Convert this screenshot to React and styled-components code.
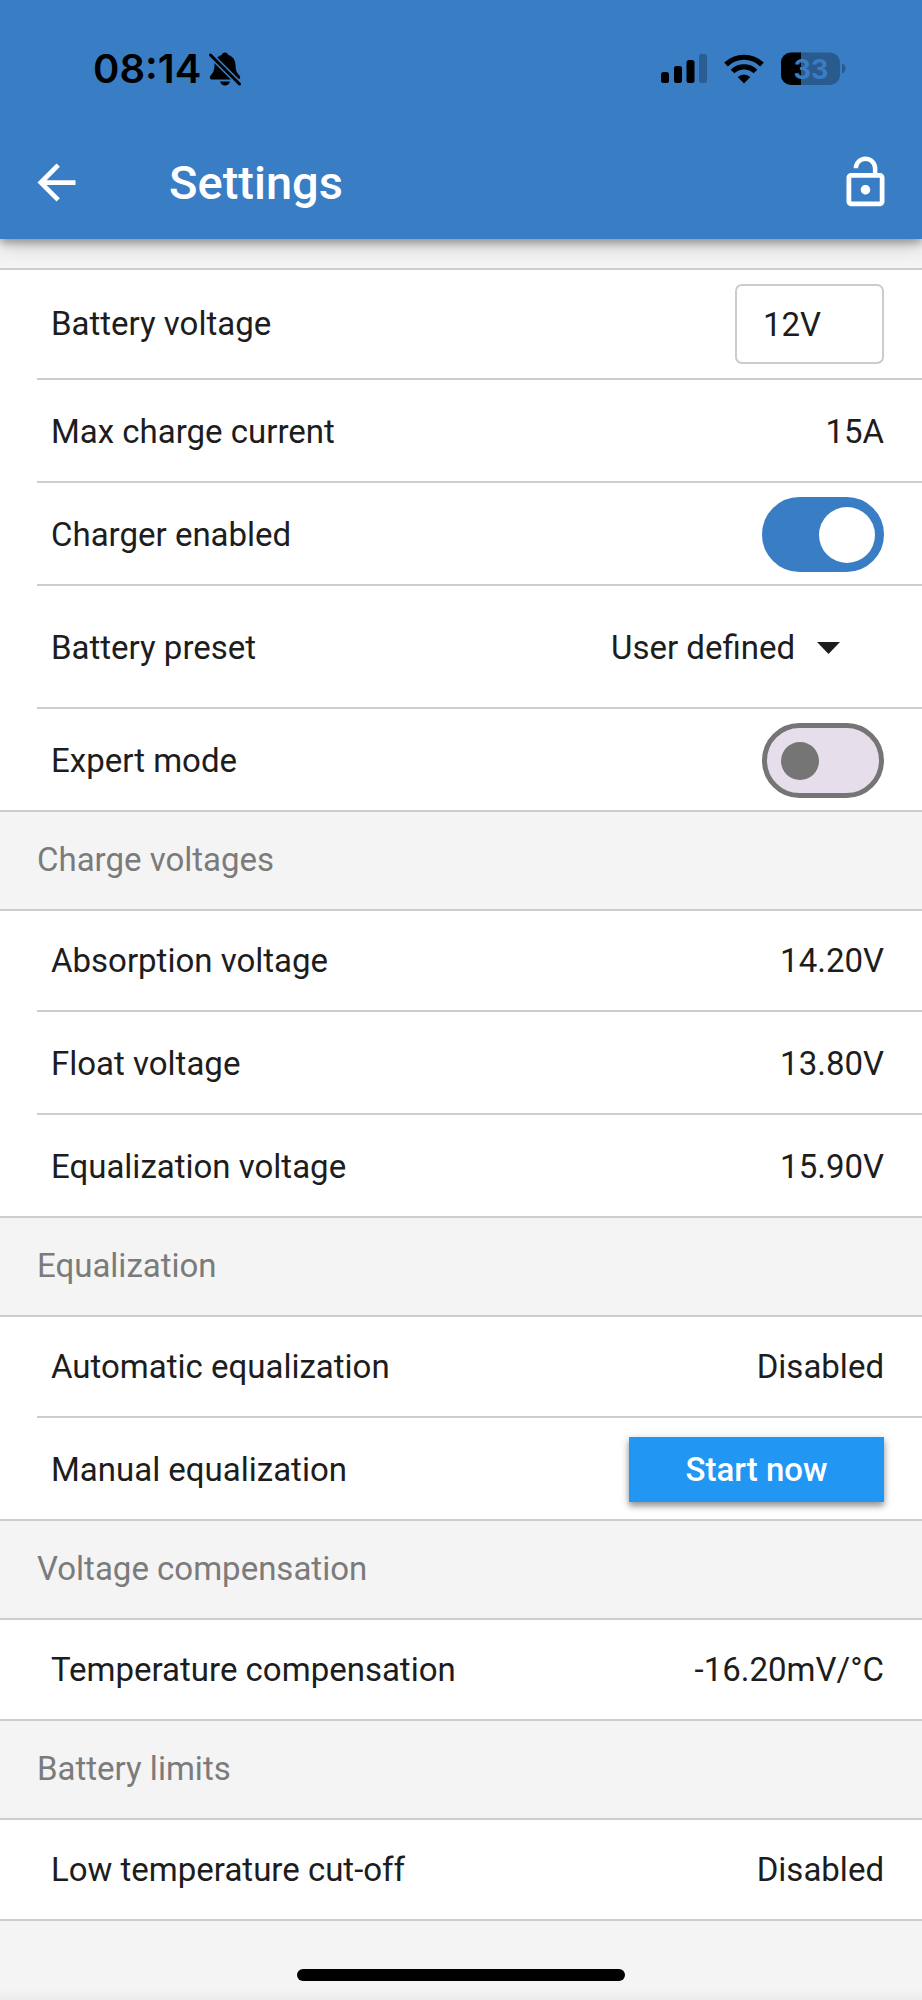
import React, { useState } from 'react'
import styled, { createGlobalStyle } from 'styled-components'

const GlobalStyle = createGlobalStyle`
  * {
    box-sizing: border-box;
  }
  body {
    margin: 0;
    background: #f4f4f4;
    color: #1d1d1d;
    font-family: Roboto, sans-serif;
    font-size: 33px;
    line-height: 40px;
  }
  button, input, select {
    font: inherit;
    color: inherit;
  }
`

const Page = styled.div`
  display: flex;
  flex-direction: column;
  min-height: 100vh;
`

const Header = styled.header`
  position: relative;
  background: #397dc5;
  box-shadow: 0 4px 8px rgba(0, 0, 0, 0.3), 0 6px 20px rgba(0, 0, 0, 0.18);
`

const StatusBar = styled.div`
  display: flex;
  align-items: center;
  justify-content: space-between;
  height: 137px;
  padding: 0 76px 0 93px;
  color: #000;
  font-family: Inter, sans-serif;
`

const StatusGroup = styled.div`
  display: flex;
  align-items: center;
  gap: ${({ $gap }) => $gap}px;
`

const Time = styled.span`
  font-size: 40px;
  font-weight: 600;
`

const Toolbar = styled.div`
  display: flex;
  align-items: center;
  height: 102px;
  padding: 0 28px 11px;
  color: #fff;
`

const Title = styled.h1`
  flex: 1;
  margin: 0 0 0 84px;
  font-size: 47px;
  line-height: 56px;
  font-weight: 500;
`

const IconButton = styled.button`
  display: flex;
  padding: 0;
  border: 0;
  background: none;
`

const Main = styled.main`
  display: flex;
  flex-direction: column;
  padding-top: 29px;
`

const SectionTitle = styled.h2`
  display: flex;
  align-items: center;
  height: 97px;
  margin: 0;
  padding: 0 37px 2px;
  color: #7b7b7b;
  font-size: 33px;
  font-weight: 400;
`

const List = styled.div`
  background: #fff;
  border-top: 2px solid #cdcdcd;
  border-bottom: 2px solid #cdcdcd;
`

const Row = styled.div`
  display: flex;
  align-items: center;
  justify-content: space-between;
  box-sizing: content-box;
  height: 99px;
  min-height: ${({ $minHeight }) => $minHeight || 0}px;
  margin-left: 37px;
  padding: 0 38px 0 14px;

  &:not(:first-child) {
    padding-top: 2px;
    border-top: 2px solid #cdcdcd;
  }
`

const VoltageInput = styled.input`
  width: 149px;
  height: 80px;
  padding: 0 26px;
  border: 2px solid #ccc;
  border-radius: 7px;
  background: #fff;
`

const SelectWrap = styled.div`
  display: flex;
  align-items: center;
  gap: 21px;
  padding-right: 44px;
`

const Select = styled.select`
  appearance: none;
  padding: 0;
  border: 0;
  background: none;
`

const Switch = styled.input`
  appearance: none;
  display: flex;
  align-items: center;
  width: 122px;
  height: 75px;
  margin: 0;
  padding: 0 14px;
  border: 5px solid #757575;
  border-radius: 38px;
  background: #e6dfeb;

  &::before {
    content: '';
    width: 38px;
    height: 38px;
    border-radius: 50%;
    background: #757575;
  }

  &:checked {
    justify-content: flex-end;
    padding: 0 4px;
    border-color: #397dc5;
    background: #397dc5;
  }

  &:checked::before {
    width: 56px;
    height: 56px;
    background: #fff;
  }
`

const StartButton = styled.button`
  width: 255px;
  height: 65px;
  padding: 0;
  border: 0;
  background: #2196f3;
  color: #fff;
  font-weight: 500;
  box-shadow: 0 4px 6px rgba(0, 0, 0, 0.35), 0 2px 10px rgba(0, 0, 0, 0.15);
`

const HomeArea = styled.footer`
  display: flex;
  flex: 1;
  justify-content: center;
  padding: 48px 0 19px;
  background: linear-gradient(to top, #ececec, #f4f4f4 12px);
`

const HomeIndicator = styled.div`
  width: 328px;
  max-width: 60%;
  height: 12px;
  border-radius: 6px;
  background: #000;
`

const BellOffIcon = () => (
  <svg width="32" height="34" viewBox="0 0 32 34">
    <path d="M16 .5c-1.800 0-2.900 1-3.300 2.600C8 4.500 5.700 8 5.500 13c-.2 5-1 7.500-3.500 10-2 2-1.500 4.500 1.300 4.500h25.400c2.800 0 3.300-2.500 1.300-4.500-2.500-2.500-3.300-5-3.500-10-.2-5-2.500-8.500-7.200-9.900C18.900 1.500 17.800.5 16 .5z" />
    <path d="M11 29.500h10c-.8 2.800-2.500 4-5 4s-4.200-1.200-5-4z" />
    <path d="M0 1.500L32 33.500" stroke="#397dc5" strokeWidth="6" />
    <path d="M1.500 3L30.500 32" stroke="#000" strokeWidth="3" strokeLinecap="round" />
  </svg>
)

const SignalIcon = () => (
  <svg width="46" height="30" viewBox="0 0 46 30">
    <rect x="0" y="18" width="8" height="11" rx="2.500" />
    <rect x="13" y="12" width="8" height="17" rx="2.500" />
    <rect x="25.500" y="6" width="8" height="23" rx="2.500" />
    <rect x="38" y="0" width="8" height="29" rx="2.500" opacity="0.250" />
  </svg>
)

const WifiIcon = () => (
  <svg width="40" height="30" viewBox="0 0 40 30">
    <g fill="none" stroke="#000" strokeWidth="5.200">
      <path d="M2 10.500a26 26 0 0 1 36 0" />
      <path d="M8.500 17.500a16.500 16.500 0 0 1 23 0" />
    </g>
    <path d="M20 29.500l-6.300-6.400a9 9 0 0 1 12.600 0z" />
  </svg>
)

const BatteryIcon = () => (
  <svg width="65" height="34" viewBox="0 0 65 34">
    <clipPath id="charge">
      <rect width="20" height="34" />
    </clipPath>
    <rect y="0.500" width="59" height="32.500" rx="10" fill="#295b8f" />
    <rect y="0.500" width="59" height="32.500" rx="10" clipPath="url(#charge)" />
    <path d="M61 11.500c4.700 1.500 4.700 8.500 0 10z" fill="#295b8f" />
    <text x="30" y="26.500" textAnchor="middle" fill="#397dc5" fontSize="27" fontWeight="700">33</text>
  </svg>
)

const BackIcon = () => (
  <svg width="57" height="57" viewBox="0 0 24 24" fill="#fff">
    <path d="M20 11H7.830l5.590-5.590L12 4l-8 8 8 8 1.410-1.410L7.830 13H20v-2z" />
  </svg>
)

const LockOpenIcon = () => (
  <svg width="57" height="57" viewBox="0 0 24 24" fill="#fff">
    <path d="M12 17c1.100 0 2-.9 2-2s-.9-2-2-2-2 .9-2 2 .9 2 2 2zm6-9h-1V6c0-2.760-2.240-5-5-5S7 3.240 7 6h1.900c0-1.710 1.390-3.100 3.100-3.100s3.100 1.390 3.100 3.100v2H6c-1.100 0-2 .9-2 2v10c0 1.100.9 2 2 2h12c1.100 0 2-.9 2-2V10c0-1.100-.9-2-2-2zm0 12H6V10h12v10z" />
  </svg>
)

const CaretIcon = () => (
  <svg width="23" height="12" viewBox="0 0 23 12" fill="#1d1d1d">
    <path d="M0 0h23L11.500 12z" />
  </svg>
)

const ValueRow = ({ label, value }) => (
  <Row>
    <span>{label}</span>
    <span>{value}</span>
  </Row>
)

const App = () => {
  const [voltage, setVoltage] = useState('12V')
  const [charger, setCharger] = useState(true)
  const [expert, setExpert] = useState(false)

  return (
    <Page>
      <GlobalStyle />
      <Header>
        <StatusBar>
          <StatusGroup $gap={8}>
            <Time>08:14</Time>
            <BellOffIcon />
          </StatusGroup>
          <StatusGroup $gap={17}>
            <SignalIcon />
            <WifiIcon />
            <BatteryIcon />
          </StatusGroup>
        </StatusBar>
        <Toolbar>
          <IconButton aria-label="Back">
            <BackIcon />
          </IconButton>
          <Title>Settings</Title>
          <IconButton aria-label="Unlock">
            <LockOpenIcon />
          </IconButton>
        </Toolbar>
      </Header>

      <Main>
        <List>
          <Row $minHeight={108}>
            <label htmlFor="voltage">Battery voltage</label>
            <VoltageInput id="voltage" value={voltage} onChange={(e) => setVoltage(e.target.value)} />
          </Row>
          <ValueRow label="Max charge current" value="15A" />
          <Row>
            <label htmlFor="charger">Charger enabled</label>
            <Switch id="charger" type="checkbox" checked={charger} onChange={(e) => setCharger(e.target.checked)} />
          </Row>
          <Row $minHeight={119}>
            <label htmlFor="preset">Battery preset</label>
            <SelectWrap>
              <Select id="preset">
                <option>User defined</option>
              </Select>
              <CaretIcon />
            </SelectWrap>
          </Row>
          <Row>
            <label htmlFor="expert">Expert mode</label>
            <Switch id="expert" type="checkbox" checked={expert} onChange={(e) => setExpert(e.target.checked)} />
          </Row>
        </List>

        <SectionTitle>Charge voltages</SectionTitle>
        <List>
          <ValueRow label="Absorption voltage" value="14.20V" />
          <ValueRow label="Float voltage" value="13.80V" />
          <ValueRow label="Equalization voltage" value="15.90V" />
        </List>

        <SectionTitle>Equalization</SectionTitle>
        <List>
          <ValueRow label="Automatic equalization" value="Disabled" />
          <Row>
            <span>Manual equalization</span>
            <StartButton>Start now</StartButton>
          </Row>
        </List>

        <SectionTitle>Voltage compensation</SectionTitle>
        <List>
          <ValueRow label="Temperature compensation" value="-16.20mV/°C" />
        </List>

        <SectionTitle>Battery limits</SectionTitle>
        <List>
          <ValueRow label="Low temperature cut-off" value="Disabled" />
        </List>
      </Main>

      <HomeArea>
        <HomeIndicator />
      </HomeArea>
    </Page>
  )
}

export default App
